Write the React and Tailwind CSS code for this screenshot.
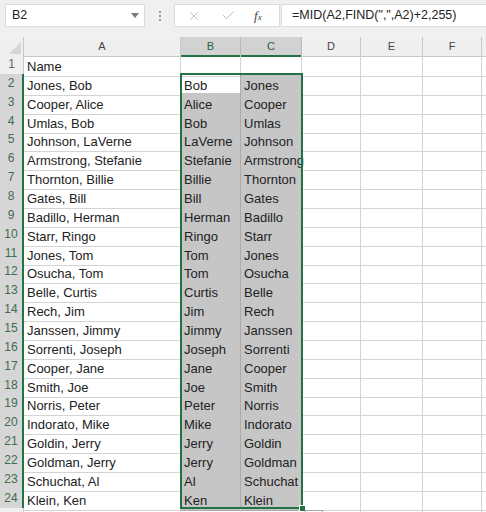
import React from "react";
import { X, Check } from "lucide-react";

const rows = [
  ["Jones, Bob", "Bob", "Jones"],
  ["Cooper, Alice", "Alice", "Cooper"],
  ["Umlas, Bob", "Bob", "Umlas"],
  ["Johnson, LaVerne", "LaVerne", "Johnson"],
  ["Armstrong, Stefanie", "Stefanie", "Armstrong"],
  ["Thornton, Billie", "Billie", "Thornton"],
  ["Gates, Bill", "Bill", "Gates"],
  ["Badillo, Herman", "Herman", "Badillo"],
  ["Starr, Ringo", "Ringo", "Starr"],
  ["Jones, Tom", "Tom", "Jones"],
  ["Osucha, Tom", "Tom", "Osucha"],
  ["Belle, Curtis", "Curtis", "Belle"],
  ["Rech, Jim", "Jim", "Rech"],
  ["Janssen, Jimmy", "Jimmy", "Janssen"],
  ["Sorrenti, Joseph", "Joseph", "Sorrenti"],
  ["Cooper, Jane", "Jane", "Cooper"],
  ["Smith, Joe", "Joe", "Smith"],
  ["Norris, Peter", "Peter", "Norris"],
  ["Indorato, Mike", "Mike", "Indorato"],
  ["Goldin, Jerry", "Jerry", "Goldin"],
  ["Goldman, Jerry", "Jerry", "Goldman"],
  ["Schuchat, Al", "Al", "Schuchat"],
  ["Klein, Ken", "Ken", "Klein"],
];

const cols = "grid grid-cols-[24px_157px_60px_61px_59px_62px_59px_1fr]";
const cell =
  "border-r border-b border-[#d4d4d4] pl-[3px] pt-[2px] leading-[19px] whitespace-nowrap text-[13px] text-[#222]";
const selCell =
  "border-r border-b border-[#ababab] bg-[#c6c6c6] pl-[3px] pt-[2px] leading-[19px] whitespace-nowrap text-[13px] text-[#222]";

function ColHead({ label, selected }) {
  return (
    <div
      className={
        selected
          ? "bg-[#d2d2d2] border-r border-[#b8b8b8] border-b-2 border-b-[#217346] text-[#2c5e3f] text-center text-[11px] leading-[18px]"
          : "bg-[#efefef] border-r border-b border-[#c8c8c8] text-[#444] text-center text-[11px] leading-[18px]"
      }
    >
      {label}
    </div>
  );
}

function RowHead({ n, selected }) {
  return (
    <div
      className={
        selected
          ? "bg-[#d6d6d6] border-b border-[#bdbdbd] border-r-2 border-r-[#217346] text-[#3f6b50] text-center text-[12px] leading-[19px]"
          : "bg-[#efefef] border-r border-b border-[#c8c8c8] text-[#666] text-center text-[12px] leading-[19px]"
      }
    >
      {n}
    </div>
  );
}

export default function App() {
  return (
    <div className="w-[486px] h-[512px] overflow-hidden bg-white font-['Liberation_Sans',sans-serif]">
      {/* formula bar */}
      <div className="h-[37px] bg-[#f0f0f0] flex items-start pt-[4px]">
        <div className="ml-[5px] w-[140px] h-[23px] bg-white border border-[#dcdcdc] flex items-center justify-between pl-[6px] pr-[5px]">
          <span className="text-[12.5px] text-[#222]">B2</span>
          <svg width="8" height="5" viewBox="0 0 8 5">
            <path d="M0 0h8L4 5z" fill="#7a7a7a" />
          </svg>
        </div>
        <div className="w-[29px] h-[23px] flex flex-col items-center justify-center gap-[2px]">
          <span className="w-[2px] h-[2px] bg-[#9a9a9a]" />
          <span className="w-[2px] h-[2px] bg-[#9a9a9a]" />
          <span className="w-[2px] h-[2px] bg-[#9a9a9a]" />
        </div>
        <div className="w-[106px] h-[23px] bg-white border border-[#dcdcdc] flex items-center pl-[12px]">
          <X size={14} strokeWidth={1.3} color="#a8a8a8" />
          <Check size={15} strokeWidth={1.3} color="#a8a8a8" className="ml-[20px]" />
          <span className="ml-[18px] font-['Liberation_Serif',serif] italic text-[13px] text-[#444]">
            f<span className="text-[9px]">x</span>
          </span>
        </div>
        <div className="ml-[1px] flex-1 h-[23px] bg-white border border-r-0 border-[#dcdcdc] flex items-center pl-[10px]">
          <span className="text-[12.5px] text-[#222]">=MID(A2,FIND(",",A2)+2,255)</span>
        </div>
      </div>

      {/* sheet */}
      <div className="relative">
        <div className={cols + " h-[18px]"}>
          <div className="bg-[#efefef] border-r border-b border-[#c8c8c8] flex items-end justify-end pr-[2px] pb-[2px]">
            <svg width="12" height="12" viewBox="0 0 12 12">
              <path d="M12 0V12H0z" fill="#d6d6d6" />
            </svg>
          </div>
          <ColHead label="A" />
          <ColHead label="B" selected />
          <ColHead label="C" selected />
          <ColHead label="D" />
          <ColHead label="E" />
          <ColHead label="F" />
          <div className="bg-[#efefef] border-b border-[#c8c8c8]" />
        </div>

        <div className={cols + " h-[18.87px]"}>
          <RowHead n={1} />
          <div className={cell}>Name</div>
          <div className={cell} />
          <div className={cell} />
          <div className={cell} />
          <div className={cell} />
          <div className={cell} />
          <div className="border-b border-[#d4d4d4]" />
        </div>

        {rows.map((r, i) => (
          <div key={i} className={cols + " h-[18.87px]"}>
            <RowHead n={i + 2} selected />
            <div className={cell}>{r[0]}</div>
            <div className={i === 0 ? cell + " border-r-[#ababab] border-b-[#ababab]" : selCell}>{r[1]}</div>
            <div className={selCell}>{r[2]}</div>
            <div className={cell} />
            <div className={cell} />
            <div className={cell} />
            <div className="border-b border-[#d4d4d4]" />
          </div>
        ))}

        <div className={cols + " h-[18.87px]"}>
          <RowHead n="" />
          <div className={cell} />
          <div className={cell} />
          <div className={cell} />
          <div className={cell} />
          <div className={cell} />
          <div className={cell} />
          <div />
        </div>

        {/* selection outline */}
        <div className="absolute left-[180px] top-[36px] w-[123px] h-[436px] border-2 border-[#217346] pointer-events-none" />
        <div className="absolute left-[299px] top-[468px] w-[7px] h-[7px] bg-[#217346] border border-white" />
        <div className="absolute left-[305px] top-[473px] w-[18px] h-[12px] bg-white border border-[#a6a6a6]" />
      </div>
    </div>
  );
}
